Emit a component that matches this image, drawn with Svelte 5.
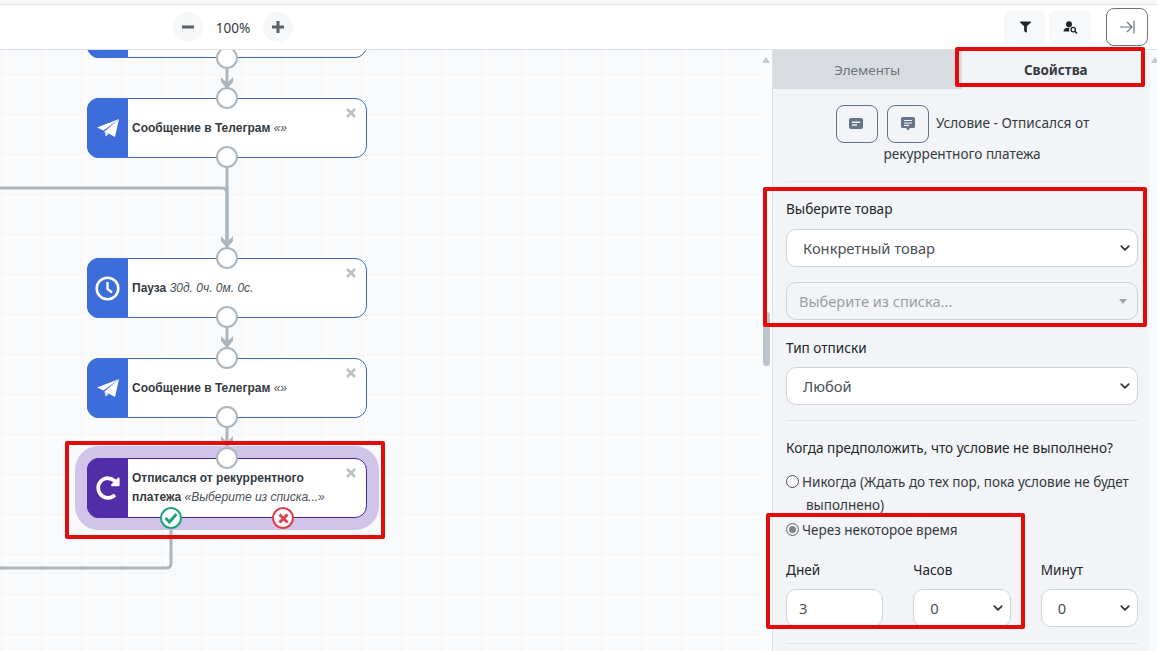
<script>
  const redo = "M256.455 8c66.269.119 126.437 26.233 170.859 68.685l35.715-35.715C478.149 25.851 504 36.559 504 57.941V192c0 13.255-10.745 24-24 24H345.941c-21.382 0-32.09-25.851-16.971-40.971l41.75-41.750c-30.864-28.899-70.801-44.907-113.23-45.273-92.398-.798-170.283 73.977-169.484 169.442C88.764 348.009 162.184 424 256 424c41.127 0 79.997-14.678 110.629-41.556 4.743-4.161 11.906-3.908 16.368.553l39.662 39.662c4.872 4.872 4.631 12.815-.482 17.433C378.202 479.813 319.926 504 256 504 119.034 504 8.001 392.967 8 256.002 7.999 119.193 119.646 7.755 256.455 8z";
  const nodes = [
    { y: -52, icon: "plane", title: "", note: "" },
    { y: 48, icon: "plane", title: "Сообщение в Телеграм", note: "«»" },
    { y: 208, icon: "clock", title: "Пауза", note: "30д. 0ч. 0м. 0с." },
    { y: 308, icon: "plane", title: "Сообщение в Телеграм", note: "«»" },
    { y: 408, icon: "redo", title: "Отписался от рекуррентного платежа", note: "«Выберите из списка...»", active: true }
  ];
  const ports = [8, 48, 107, 208, 267, 308, 367, 408];
</script>

<div class="page">
  <div class="strip"></div>
  <header class="toolbar">
    <div class="zoom">
      <button class="round" aria-label="Уменьшить"><svg width="12" height="12" viewBox="0 0 12 12"><path d="M0 6h12" stroke="#5b6168" stroke-width="3"/></svg></button>
      <span class="pct">100%</span>
      <button class="round" aria-label="Увеличить"><svg width="12" height="12" viewBox="0 0 12 12"><path d="M0 6h12M6 0v12" stroke="#5b6168" stroke-width="3"/></svg></button>
    </div>
    <div class="tools">
      <button class="tool" aria-label="Фильтр"><svg width="11" height="12" viewBox="0 0 512 512"><path fill="#212529" d="M487.976 0H24.028C2.71 0-8.047 25.866 7.058 40.971L192 225.941V432c0 7.831 3.821 15.17 10.237 19.662l80 55.98C298.02 518.69 320 507.493 320 487.98V225.941l184.947-184.97C520.021 25.896 509.338 0 487.976 0z"/></svg></button>
      <button class="tool" aria-label="Поиск"><svg width="15" height="13" viewBox="0 0 15 13"><circle cx="6" cy="3.200" r="3" fill="#212529"/><path d="M0.500 10.500c0-2.500 2-3.800 4-3.800h2.200c-.8 1-.9 2.600-.2 3.800z" fill="#212529"/><circle cx="10.200" cy="8.600" r="2.200" fill="none" stroke="#212529" stroke-width="1.300"/><path d="M11.800 10.200l2.200 2.200" stroke="#212529" stroke-width="1.500"/></svg></button>
      <button class="outline" aria-label="Свернуть"><svg width="16" height="14" viewBox="0 0 16 14"><path d="M1 7h12M8 2l5 5-5 5M15 0.500v13" fill="none" stroke="#6c757d" stroke-width="1.200"/></svg></button>
    </div>
  </header>

  <main class="body">
    <section class="canvas">
      <svg class="wires" width="773" height="601" viewBox="0 0 773 601" fill="none">
        <g stroke="#adb5bd" stroke-width="3">
          <path d="M227 18v28"/>
          <path d="M227 117v78"/>
          <path d="M0 138h222q5 0 5 5v54"/>
          <path d="M227 277v28"/>
          <path d="M227 377v28"/>
          <path d="M171 478v35q0 5-5 5H0"/>
        </g>
        <g fill="#adb5bd">
          <path d="M221 27l6 6 6-6v5l-6 7-6-7z"/>
          <path d="M221 186l6 6 6-6v5l-6 7-6-7z"/>
          <path d="M221 286l6 6 6-6v5l-6 7-6-7z"/>
          <path d="M221 386l6 6 6-6v5l-6 7-6-7z"/>
        </g>
      </svg>

      {#each nodes as n}
        <div class="node" class:active={n.active} style="top:{n.y}px">
          <div class="badge">
            {#if n.icon === "plane"}
              <svg width="22" height="18" viewBox="0 0 22 18"><path fill="#fff" d="M22 0L0 8.500l6.500 3z"/><path fill="#fff" d="M22 0L7.500 12.500 9 17.500l2.500-3L18 18z"/><path fill="#cfe0fa" d="M7.500 12.500L9 17.500l2.500-3z"/></svg>
            {:else if n.icon === "clock"}
              <svg width="25" height="25" viewBox="0 0 25 25" fill="none" stroke="#fff"><circle cx="12.500" cy="12.500" r="10.800" stroke-width="2.600"/><path d="M12.500 6v7l4.500 3.500" stroke-width="2.400"/></svg>
            {:else}
              <svg width="24" height="24" viewBox="0 0 512 512"><path fill="#fff" d={redo}/></svg>
            {/if}
          </div>
          <div class="text"><b>{n.title}</b> <i>{n.note}</i></div>
          <svg class="close" width="10" height="10" viewBox="0 0 10 10"><path d="M1 1l8 8M9 1l-8 8" stroke="#bcc1c7" stroke-width="2.600"/></svg>
        </div>
      {/each}

      {#each ports as p}
        <span class="port" style="top:{p - 11}px"></span>
      {/each}

      <span class="state ok">
        <svg width="14" height="12" viewBox="0 0 14 12" fill="none"><path d="M1.500 6l4 4 7-8" stroke="#20a37d" stroke-width="3"/></svg>
      </span>
      <span class="state bad">
        <svg width="11" height="11" viewBox="0 0 11 11" fill="none"><path d="M1.500 1.500l8 8M9.500 1.500l-8 8" stroke="#dc3f4d" stroke-width="3"/></svg>
      </span>

      <div class="rail">
        <span class="up"></span>
        <span class="thumb"></span>
      </div>
    </section>

    <aside class="panel">
      <div class="tabs">
        <div class="tab">Элементы</div>
        <div class="tab on">Свойства</div>
      </div>
      <div class="content">
        <div class="title">
          <button class="sq" aria-label="Заметка"><svg width="15" height="12" viewBox="0 0 15 12"><rect width="14" height="11" rx="2" fill="#64748b"/><path d="M3 4.200h8M3 7h5" stroke="#f3f4f7" stroke-width="1.400"/></svg></button>
          <button class="sq" aria-label="Комментарий"><svg width="14" height="14" viewBox="0 0 14 14"><path d="M1.500 0h11A1.500 1.500 0 0 1 14 1.500v8a1.500 1.500 0 0 1-1.500 1.500H9l-2 2.500L5 11H1.500A1.500 1.500 0 0 1 0 9.500v-8A1.500 1.500 0 0 1 1.500 0z" fill="#64748b"/><path d="M3 3.500h8M3 6h8M3 8.300h5" stroke="#f3f4f7" stroke-width="1.200"/></svg></button>
          <span class="ttl">Условие - Отписался от рекуррентного платежа</span>
        </div>
        <hr class="h1" />

        <label class="lbl l1" for="goods">Выберите товар</label>
        <select id="goods" class="ctl sel s1"><option>Конкретный товар</option></select>
        <div class="combo"><span>Выберите из списка...</span><i></i></div>

        <label class="lbl l2" for="kind">Тип отписки</label>
        <select id="kind" class="ctl sel"><option>Любой</option></select>
        <hr class="h2" />

        <p class="q">Когда предположить, что условие не выполнено?</p>
        <label class="radio r1"><input type="radio" name="when" /><span>Никогда (Ждать до тех пор, пока условие не будет выполнено)</span></label>
        <label class="radio r2"><input type="radio" name="when" checked /><span>Через некоторое время</span></label>

        <div class="grid">
          <div class="cell"><label class="lbl" for="d">Дней</label><input id="d" class="ctl num" value="3" /></div>
          <div class="cell"><label class="lbl" for="h">Часов</label><select id="h" class="ctl sel"><option>0</option></select></div>
          <div class="cell"><label class="lbl" for="m">Минут</label><select id="m" class="ctl sel"><option>0</option></select></div>
        </div>
        <hr class="h3" />
      </div>
    </aside>
    <div class="edge"><span></span></div>
  </main>

  <div class="mark m-tab"></div>
  <div class="mark m-goods"></div>
  <div class="mark m-time"></div>
  <div class="mark m-node"></div>
</div>

<style>
  :global(body) { margin: 0; background: #fff; }
  * { box-sizing: border-box; }
  .page { position: relative; width: 1157px; height: 651px; overflow: hidden; display: flex; flex-direction: column; font-family: "Noto Sans", sans-serif; color: #212529; }
  .strip { height: 5px; background: #f6f6f6; border-bottom: 1px solid #e6e6e6; }
  .toolbar { height: 45px; background: #fff; border-bottom: 1px solid #dee2e6; display: flex; align-items: center; justify-content: space-between; padding: 0 9px 0 173px; }
  .zoom { display: flex; align-items: center; }
  .round { width: 30px; height: 30px; border: 0; padding: 0; border-radius: 50%; background: #f6f7f9; display: flex; align-items: center; justify-content: center; }
  .pct { width: 60px; text-align: center; font-size: 13.600px; color: #343a40; }
  .tools { display: flex; align-items: center; }
  .tool { width: 42px; height: 35px; border: 0; padding: 0; margin-right: 3px; border-radius: 8px; background: #f7f8fa; display: flex; align-items: center; justify-content: center; }
  .tool + .tool { margin-right: 15px; }
  .outline { width: 42px; height: 38px; padding: 0; border: 1px solid #6c757d; border-radius: 8px; background: #fff; display: flex; align-items: center; justify-content: center; }

  .body { flex: 1; display: flex; min-height: 0; }
  .canvas { position: relative; width: 773px; overflow: hidden; background-color: #f8f9fb; background-image: linear-gradient(#fdfdfe 2px, transparent 2px), linear-gradient(90deg, #fdfdfe 2px, transparent 2px); background-size: 40px 40px; background-position: 5px 27px; }
  .wires { position: absolute; left: 0; top: 0; }
  .node { position: absolute; left: 87px; width: 280px; height: 60px; display: flex; background: #fff; border: 1px solid #3d68b8; border-radius: 12px; font-family: "Liberation Sans", Arial, sans-serif; font-size: 12px; line-height: 19px; color: #343a40; }
  .node.active { border-color: #4527a0; box-shadow: 0 0 0 12px #d1c4e9; }
  .badge { flex: none; width: 41px; margin: -1px 0 -1px -1px; border-radius: 12px 0 0 12px; background: #3d6cdb; display: flex; align-items: center; justify-content: center; }
  .active .badge { background: #512da8; }
  .text { flex: 1; padding: 0 36px 0 4px; align-self: center; }
  .text i { color: #495057; }
  .close { position: absolute; right: 10px; top: 9px; }
  .port { position: absolute; left: 216px; width: 22px; height: 22px; border-radius: 50%; background: #fff; border: 2.500px solid #adb5bd; }
  .state { position: absolute; top: 457px; width: 22px; height: 22px; border-radius: 50%; background: #fff; display: flex; align-items: center; justify-content: center; border: 2.500px solid; }
  .ok { left: 160px; border-color: #20a37d; }
  .bad { left: 272px; border-color: #dc3f4d; }
  .rail { position: absolute; right: 0; top: 0; bottom: 0; width: 13px; background: #fbfcfd; border-right: 1px solid #dfe3e8; }
  .up { position: absolute; left: 2px; top: 7px; border: 4px solid transparent; border-top: 0; border-bottom: 6px solid #c4c9cf; }
  .thumb { position: absolute; left: 3px; top: 262px; width: 7px; height: 54px; border-radius: 3px; background: #bcc3cb; }

  .panel { width: 377px; background: #f3f4f7; font-size: 13.600px; }
  .tabs { display: flex; height: 39px; }
  .tab { flex: 1; display: flex; align-items: center; justify-content: center; background: #d8dce1; color: #6c757d; font-size: 13.400px; }
  .tab.on { background: #f3f4f7; color: #343a40; font-weight: 700; }
  .content { padding: 0 12px 0 13px; }
  .title { margin-top: 16px; text-align: center; line-height: 22px; color: #343a40; font-size: 13.600px; }
  .sq { width: 42px; height: 38px; margin-right: 4px; padding: 0; border: 1px solid #64748b; border-radius: 8px; background: transparent; display: inline-flex; align-items: center; justify-content: center; vertical-align: middle; }
  .sq:first-child { margin: 0 5.200px 0 1px; }
  hr { margin: 0; border: 0; border-top: 1px solid #e2e5e9; }
  .h1 { margin-top: 16px; }
  .lbl { display: block; font-size: 13.600px; line-height: 20px; color: #212529; }
  .l1 { margin-top: 17px; }
  .l2 { margin-top: 18px; }
  .ctl { display: block; width: 100%; height: 38px; padding: 0 16px; border: 1px solid #ced4da; border-radius: 10px; background-color: #fff; font: 14.700px/36px "Noto Sans", sans-serif; color: #495057; outline: 0; }
  .num { padding: 0 12px; }
  .sel { appearance: none; -webkit-appearance: none; background-image: url("data:image/svg+xml,%3Csvg xmlns='http://www.w3.org/2000/svg' viewBox='0 0 16 16'%3E%3Cpath fill='none' stroke='%23343a40' stroke-width='2.400' stroke-linecap='round' stroke-linejoin='round' d='M3 5.500l5 5 5-5'/%3E%3C/svg%3E"); background-repeat: no-repeat; background-position: right 6px center; background-size: 12px 12px; }
  .lbl + .ctl { margin-top: 9px; }
  .l1 + .s1 { margin-top: 10px; }
  .combo { position: relative; height: 38px; margin-top: 15px; padding: 0 12px; border: 1px solid #ced4da; border-radius: 10px; background: #f3f4f7; line-height: 36px; font-size: 14.600px; color: #9a9fa5; }
  .combo i { position: absolute; right: 10px; top: 16px; border: 4px solid transparent; border-bottom: 0; border-top: 5px solid #a3a8ae; }
  .h2 { margin-top: 15px; }
  .q { margin: 17px 0 0; line-height: 20px; font-size: 13.600px; }
  .radio { display: block; position: relative; padding-left: 20px; line-height: 23px; font-size: 13.500px; color: #343a40; }
  .radio span { display: block; text-indent: -4px; }
  .radio input { appearance: none; -webkit-appearance: none; position: absolute; left: 0; top: 4px; width: 13px; height: 13px; margin: 0; border: 1px solid #495057; border-radius: 50%; background: #fff; }
  .radio input:checked { border-color: #6c757d; background: #808589; box-shadow: inset 0 0 0 2px #f3f4f7; }
  .r1 { margin-top: 13px; }
  .r2 { margin-top: 2px; }
  .grid { display: grid; grid-template-columns: repeat(3, 1fr); gap: 30px; margin-top: 18px; }
  .cell .lbl { margin-bottom: 9px; }
  .cell .ctl { margin-top: 0; }
  .h3 { margin-top: 16px; }
  .edge { position: relative; flex: 1; background: #f9fafb; }
  .edge span { position: absolute; left: 1px; top: 7px; border: 4px solid transparent; border-top: 0; border-bottom: 6px solid #c4c9cf; }

  .mark { position: absolute; border: 4px solid #e40b0b; border-radius: 2px; pointer-events: none; }
  .m-tab { left: 955px; top: 47px; width: 190px; height: 40px; }
  .m-goods { left: 763px; top: 187px; width: 384px; height: 140px; }
  .m-time { left: 766px; top: 513px; width: 259px; height: 116px; }
  .m-node { left: 65px; top: 441px; width: 320px; height: 98px; }
</style>
